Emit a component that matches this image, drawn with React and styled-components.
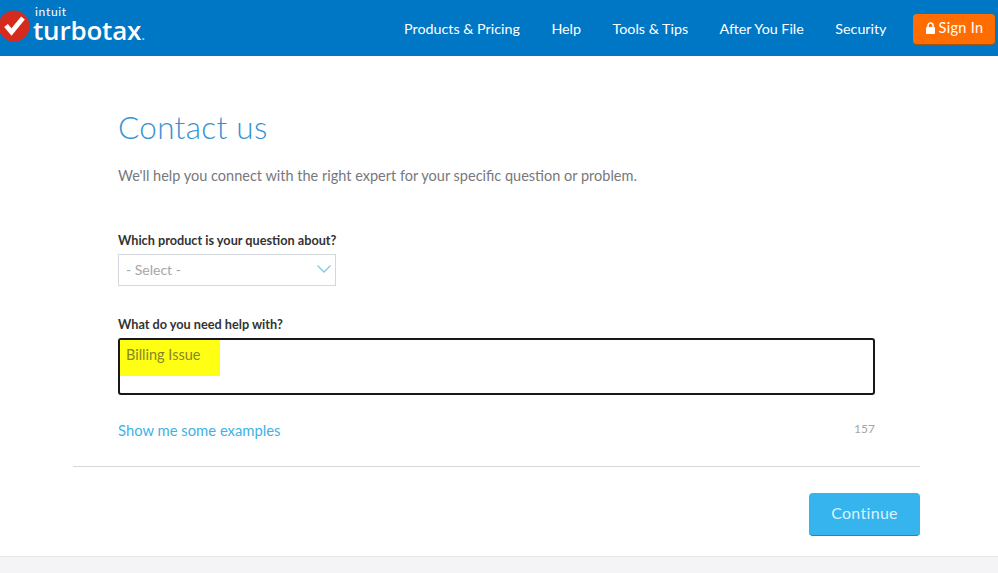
import React from "react";
import styled, { createGlobalStyle } from "styled-components";

const GlobalStyle = createGlobalStyle`
  html, body {
    margin: 0;
    padding: 0;
    background: #fff;
    font-family: Lato, "Open Sans", sans-serif;
    overflow: hidden;
  }
`;

const Page = styled.div`
  width: 998px;
  height: 573px;
  display: flex;
  flex-direction: column;
`;

const Header = styled.header`
  height: 56px;
  flex-shrink: 0;
  background: #0077c5;
  display: flex;
  align-items: center;
  justify-content: space-between;
  padding: 0 3px 0 0;
`;

const Logo = styled.div`
  display: flex;
  align-items: flex-start;
  gap: 3px;
  margin-top: 2px;
  margin-left: -2px;
`;

const LogoWords = styled.div`
  display: flex;
  flex-direction: column;
  color: #fff;
  margin-top: -4px;
`;

const Intuit = styled.span`
  font-size: 12px;
  line-height: 11px;
  letter-spacing: 0.7px;
  margin-left: 2px;
`;

const Turbotax = styled.span`
  font-family: "Open Sans", sans-serif;
  font-size: 26px;
  line-height: 26px;
  font-weight: 600;
  letter-spacing: -0.2px;
`;

const Dot = styled.span`
  font-size: 14px;
  color: #9fd0ee;
`;

const Nav = styled.nav`
  display: flex;
  align-items: center;
`;

const NavLink = styled.a`
  color: #fff;
  font-size: 14.3px;
  margin-right: 31.5px;
`;

const SignIn = styled.button`
  width: 82px;
  height: 31px;
  margin: 2px 0 0 -5px;
  border: 0;
  border-bottom: 1px solid #a9560f;
  border-radius: 4px;
  background: #ff6d00;
  color: #fff;
  font-family: inherit;
  font-size: 14.5px;
  letter-spacing: 0.3px;
  display: flex;
  align-items: center;
  justify-content: center;
  gap: 3px;
  padding: 0 0 2px;
`;

const Main = styled.main`
  flex: 1;
  padding: 50px 78px 0 73px;
  display: flex;
  flex-direction: column;
`;

const Form = styled.div`
  padding: 0 45px;
  display: flex;
  flex-direction: column;
`;

const Title = styled.h1`
  margin: 0;
  color: #0077c5;
  font-size: 31.5px;
  line-height: 42px;
  font-weight: 300;
  letter-spacing: 0.3px;
  opacity: 0.8;
`;

const Intro = styled.p`
  margin: 19px 0 0;
  color: #77787d;
  font-size: 14.5px;
  line-height: 18px;
`;

const Label = styled.label`
  display: block;
  color: #333;
  font-size: 12.7px;
  line-height: 18px;
  font-weight: 700;
  margin: ${(props) => props.$top}px 0 5px;
`;

const Select = styled.div`
  width: 218px;
  height: 32px;
  box-sizing: border-box;
  border: 1px solid #d4d7dc;
  display: flex;
  align-items: center;
  justify-content: space-between;
  padding: 0 3px 2px 7px;
  color: #a5a6aa;
  font-size: 14px;
`;

const TextArea = styled.div`
  height: 57px;
  box-sizing: border-box;
  border: 2px solid #16181c;
  border-radius: 3px;
  position: relative;
`;

const Highlight = styled.div`
  width: 100px;
  height: 36px;
  box-sizing: border-box;
  background: #ffff14;
  color: #85862a;
  font-size: 14.5px;
  line-height: 18px;
  padding: 6px 0 0 6px;
`;

const FormFoot = styled.div`
  display: flex;
  justify-content: space-between;
  align-items: center;
  margin-top: 25px;
  height: 20px;
`;

const Examples = styled.a`
  color: #3eb1e6;
  font-size: 14.8px;
`;

const Count = styled.span`
  color: #a5a6aa;
  font-size: 12px;
  margin-top: -4px;
`;

const Divider = styled.hr`
  margin: 26px 0 0;
  border: 0;
  border-top: 1px solid #d4d7dc;
  height: 0;
`;

const Actions = styled.div`
  display: flex;
  justify-content: flex-end;
  margin-top: 26px;
`;

const Continue = styled.button`
  width: 111px;
  height: 43px;
  border: 0;
  border-bottom: 1px solid #2a85b5;
  border-radius: 4px;
  background: #35b4ee;
  color: #d8f3ff;
  font-family: inherit;
  font-size: 16px;
  letter-spacing: 0.3px;
  padding: 0 0 4px;
`;

const Footer = styled.footer`
  height: 16px;
  flex-shrink: 0;
  background: #f4f4f6;
  border-top: 1px solid #e4e5e8;
`;

const links = ["Products & Pricing", "Help", "Tools & Tips", "After You File", "Security"];

const CheckMark = () => (
  <svg width="32" height="32" viewBox="0 0 32 32">
    <circle cx="16" cy="16" r="15.5" fill="#d52b1e" />
    <path d="M8 15.5 L13.5 22 L25 8" fill="none" stroke="#fff" strokeWidth="4.8" />
  </svg>
);

const LockIcon = () => (
  <svg width="11" height="12" viewBox="0 0 11 12">
    <rect x="1" y="5" width="9" height="7" rx="1" fill="#fff" />
    <path d="M3 5.5 V3.5 a2.5 2.5 0 0 1 5 0 V5.5" fill="none" stroke="#fff" strokeWidth="1.5" />
  </svg>
);

const Chevron = () => (
  <svg width="16" height="10" viewBox="0 0 16 10">
    <path d="M1.5 1.5 L8 8 L14.5 1.5" fill="none" stroke="#7fcbe8" strokeWidth="1.3" />
  </svg>
);

const App = () => {
  return (
    <Page>
      <GlobalStyle />
      <Header>
        <Logo>
          <CheckMark />
          <LogoWords>
            <Intuit>intuit</Intuit>
            <Turbotax>
              turbotax<Dot>.</Dot>
            </Turbotax>
          </LogoWords>
        </Logo>
        <Nav>
          {links.map((link) => (
            <NavLink key={link}>{link}</NavLink>
          ))}
          <SignIn>
            <LockIcon />
            Sign In
          </SignIn>
        </Nav>
      </Header>
      <Main>
        <Form>
          <Title>Contact us</Title>
          <Intro>We'll help you connect with the right expert for your specific question or problem.</Intro>
          <Label $top={46}>Which product is your question about?</Label>
          <Select>
            - Select -
            <Chevron />
          </Select>
          <Label $top={29}>What do you need help with?</Label>
          <TextArea>
            <Highlight>Billing Issue</Highlight>
          </TextArea>
          <FormFoot>
            <Examples>Show me some examples</Examples>
            <Count>157</Count>
          </FormFoot>
        </Form>
        <Divider />
        <Actions>
          <Continue>Continue</Continue>
        </Actions>
      </Main>
      <Footer />
    </Page>
  );
};

export default App;
